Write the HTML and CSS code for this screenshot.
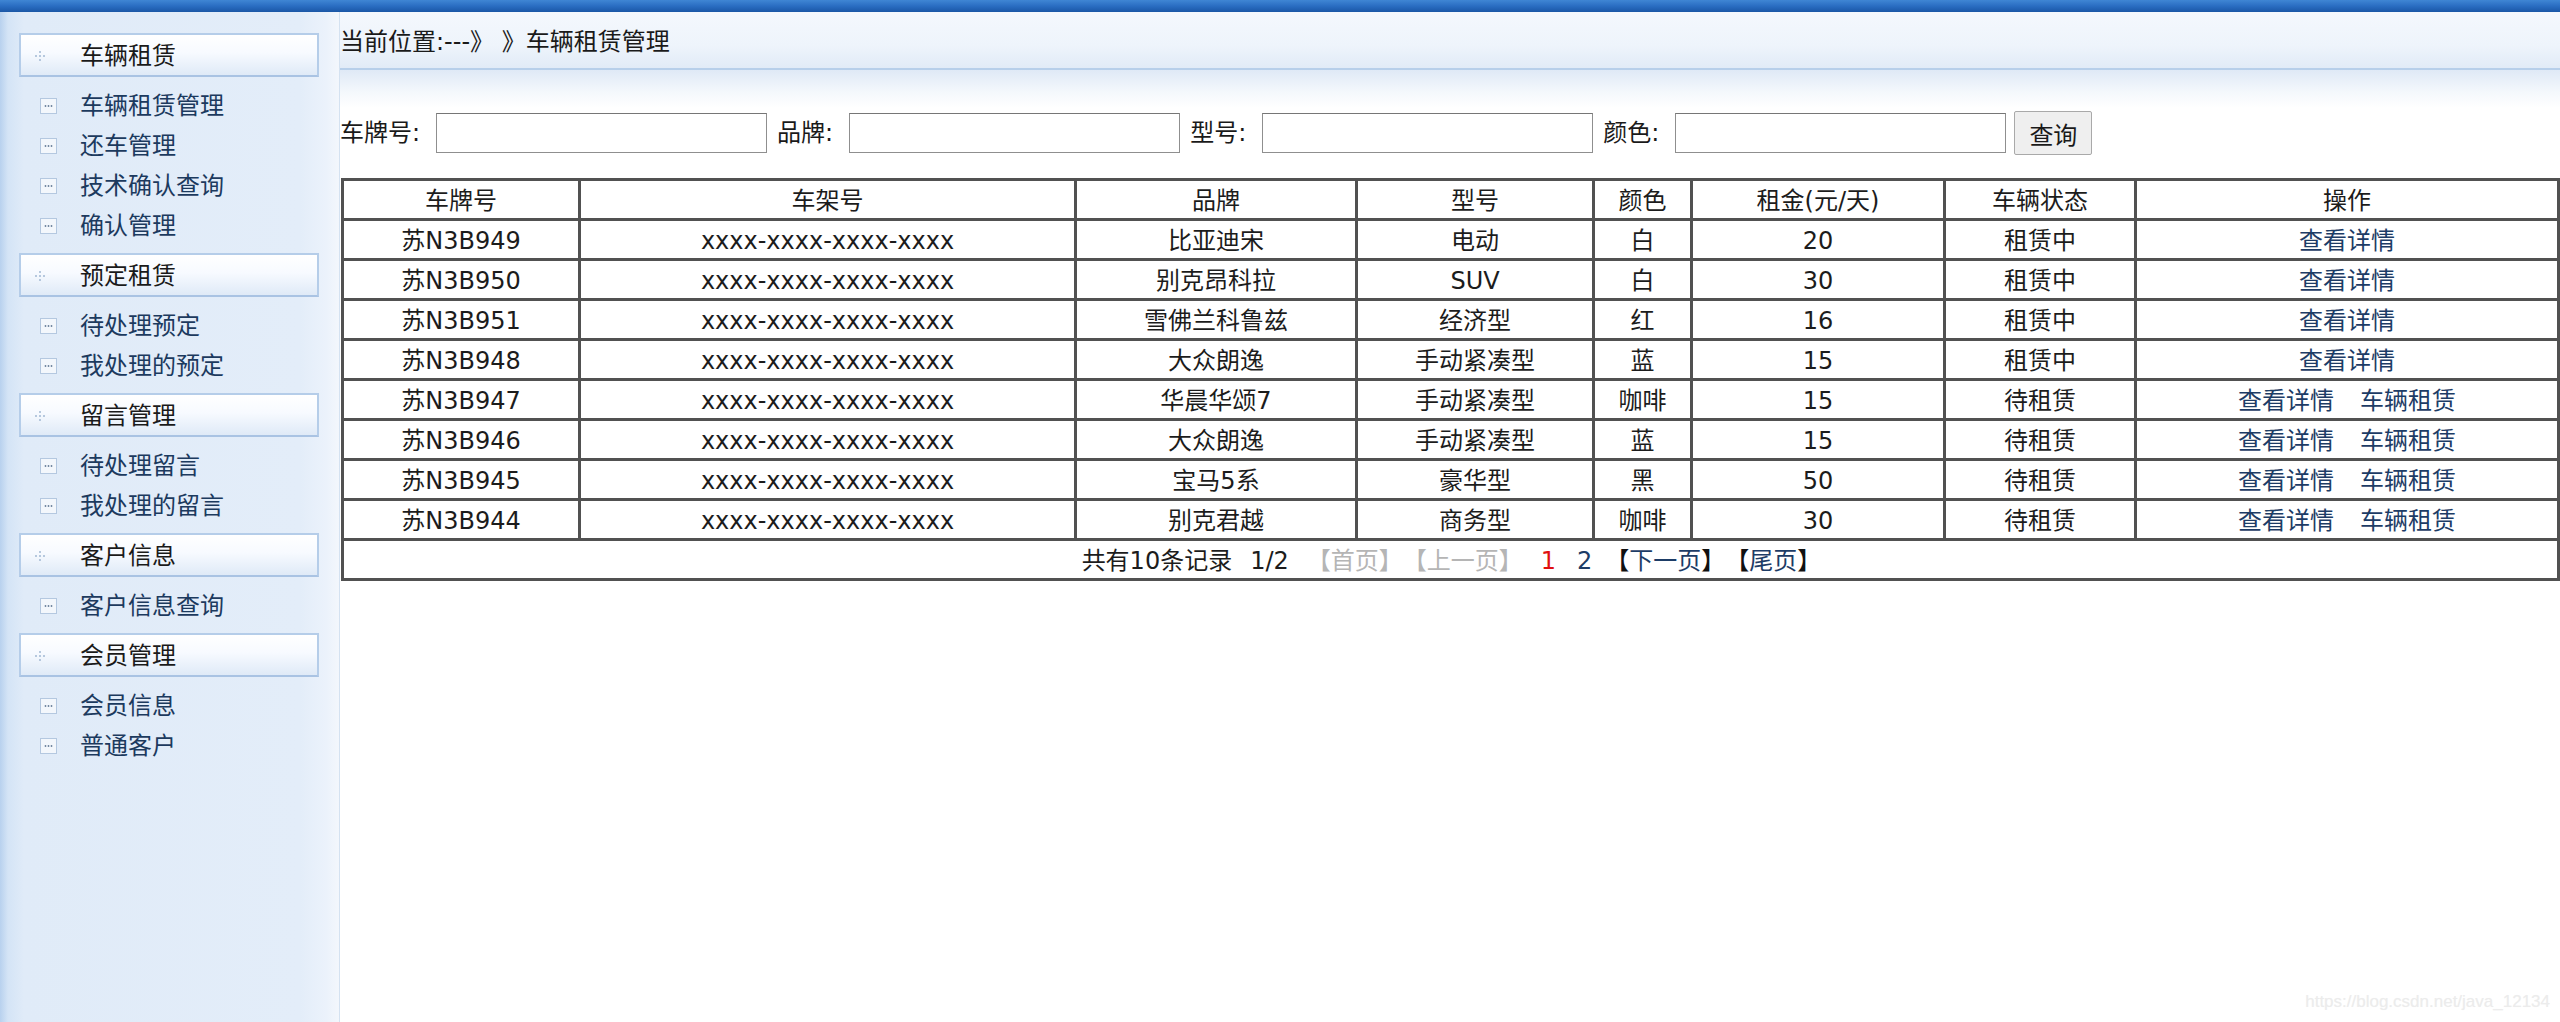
FILE: index.html
```html
<!DOCTYPE html>
<html lang="zh-CN">
<head>
<meta charset="utf-8">
<title>车辆租赁管理</title>
<link rel="stylesheet" href="styles.css">
</head>
<body>
<div class="topbar"></div>
<div class="layout">
  <aside class="sidebar">
    <div class="group">
      <div class="ghead"><svg class="gicon" viewBox="0 0 12 12"><circle cx="6" cy="2" r="1"/><circle cx="2" cy="6" r="1"/><circle cx="6" cy="6" r="1"/><circle cx="10" cy="6" r="1"/><circle cx="6" cy="10" r="1"/></svg><span>车辆租赁</span></div>
      <ul class="items">
        <li><svg class="iicon" viewBox="0 0 17 16"><rect x="0.5" y="0.5" width="16" height="15" fill="#f3f7fc" stroke="#b4c8e0"/><circle cx="5.5" cy="8" r="0.9"/><circle cx="8.5" cy="8" r="0.9"/><circle cx="11.5" cy="8" r="0.9"/></svg><a>车辆租赁管理</a></li>
        <li><svg class="iicon" viewBox="0 0 17 16"><rect x="0.5" y="0.5" width="16" height="15" fill="#f3f7fc" stroke="#b4c8e0"/><circle cx="5.5" cy="8" r="0.9"/><circle cx="8.5" cy="8" r="0.9"/><circle cx="11.5" cy="8" r="0.9"/></svg><a>还车管理</a></li>
        <li><svg class="iicon" viewBox="0 0 17 16"><rect x="0.5" y="0.5" width="16" height="15" fill="#f3f7fc" stroke="#b4c8e0"/><circle cx="5.5" cy="8" r="0.9"/><circle cx="8.5" cy="8" r="0.9"/><circle cx="11.5" cy="8" r="0.9"/></svg><a>技术确认查询</a></li>
        <li><svg class="iicon" viewBox="0 0 17 16"><rect x="0.5" y="0.5" width="16" height="15" fill="#f3f7fc" stroke="#b4c8e0"/><circle cx="5.5" cy="8" r="0.9"/><circle cx="8.5" cy="8" r="0.9"/><circle cx="11.5" cy="8" r="0.9"/></svg><a>确认管理</a></li>
      </ul>
    </div>
    <div class="group">
      <div class="ghead"><svg class="gicon" viewBox="0 0 12 12"><circle cx="6" cy="2" r="1"/><circle cx="2" cy="6" r="1"/><circle cx="6" cy="6" r="1"/><circle cx="10" cy="6" r="1"/><circle cx="6" cy="10" r="1"/></svg><span>预定租赁</span></div>
      <ul class="items">
        <li><svg class="iicon" viewBox="0 0 17 16"><rect x="0.5" y="0.5" width="16" height="15" fill="#f3f7fc" stroke="#b4c8e0"/><circle cx="5.5" cy="8" r="0.9"/><circle cx="8.5" cy="8" r="0.9"/><circle cx="11.5" cy="8" r="0.9"/></svg><a>待处理预定</a></li>
        <li><svg class="iicon" viewBox="0 0 17 16"><rect x="0.5" y="0.5" width="16" height="15" fill="#f3f7fc" stroke="#b4c8e0"/><circle cx="5.5" cy="8" r="0.9"/><circle cx="8.5" cy="8" r="0.9"/><circle cx="11.5" cy="8" r="0.9"/></svg><a>我处理的预定</a></li>
      </ul>
    </div>
    <div class="group">
      <div class="ghead"><svg class="gicon" viewBox="0 0 12 12"><circle cx="6" cy="2" r="1"/><circle cx="2" cy="6" r="1"/><circle cx="6" cy="6" r="1"/><circle cx="10" cy="6" r="1"/><circle cx="6" cy="10" r="1"/></svg><span>留言管理</span></div>
      <ul class="items">
        <li><svg class="iicon" viewBox="0 0 17 16"><rect x="0.5" y="0.5" width="16" height="15" fill="#f3f7fc" stroke="#b4c8e0"/><circle cx="5.5" cy="8" r="0.9"/><circle cx="8.5" cy="8" r="0.9"/><circle cx="11.5" cy="8" r="0.9"/></svg><a>待处理留言</a></li>
        <li><svg class="iicon" viewBox="0 0 17 16"><rect x="0.5" y="0.5" width="16" height="15" fill="#f3f7fc" stroke="#b4c8e0"/><circle cx="5.5" cy="8" r="0.9"/><circle cx="8.5" cy="8" r="0.9"/><circle cx="11.5" cy="8" r="0.9"/></svg><a>我处理的留言</a></li>
      </ul>
    </div>
    <div class="group">
      <div class="ghead"><svg class="gicon" viewBox="0 0 12 12"><circle cx="6" cy="2" r="1"/><circle cx="2" cy="6" r="1"/><circle cx="6" cy="6" r="1"/><circle cx="10" cy="6" r="1"/><circle cx="6" cy="10" r="1"/></svg><span>客户信息</span></div>
      <ul class="items">
        <li><svg class="iicon" viewBox="0 0 17 16"><rect x="0.5" y="0.5" width="16" height="15" fill="#f3f7fc" stroke="#b4c8e0"/><circle cx="5.5" cy="8" r="0.9"/><circle cx="8.5" cy="8" r="0.9"/><circle cx="11.5" cy="8" r="0.9"/></svg><a>客户信息查询</a></li>
      </ul>
    </div>
    <div class="group">
      <div class="ghead"><svg class="gicon" viewBox="0 0 12 12"><circle cx="6" cy="2" r="1"/><circle cx="2" cy="6" r="1"/><circle cx="6" cy="6" r="1"/><circle cx="10" cy="6" r="1"/><circle cx="6" cy="10" r="1"/></svg><span>会员管理</span></div>
      <ul class="items">
        <li><svg class="iicon" viewBox="0 0 17 16"><rect x="0.5" y="0.5" width="16" height="15" fill="#f3f7fc" stroke="#b4c8e0"/><circle cx="5.5" cy="8" r="0.9"/><circle cx="8.5" cy="8" r="0.9"/><circle cx="11.5" cy="8" r="0.9"/></svg><a>会员信息</a></li>
        <li><svg class="iicon" viewBox="0 0 17 16"><rect x="0.5" y="0.5" width="16" height="15" fill="#f3f7fc" stroke="#b4c8e0"/><circle cx="5.5" cy="8" r="0.9"/><circle cx="8.5" cy="8" r="0.9"/><circle cx="11.5" cy="8" r="0.9"/></svg><a>普通客户</a></li>
      </ul>
    </div>
  </aside>
  <main class="main">
    <div class="crumb">当前位置:---》 》车辆租赁管理</div>
    <form class="search">
      <label class="lbl">车牌号:</label><input class="inp" type="text">
      <label class="lbl">品牌:</label><input class="inp" type="text">
      <label class="lbl">型号:</label><input class="inp" type="text">
      <label class="lbl">颜色:</label><input class="inp" type="text">
      <button class="btn" type="button">查询</button>
    </form>
    <table class="grid">
      <colgroup>
        <col class="c1"><col class="c2"><col class="c3"><col class="c4"><col class="c5"><col class="c6"><col class="c7"><col class="c8">
      </colgroup>
      <thead>
        <tr><th>车牌号</th><th>车架号</th><th>品牌</th><th>型号</th><th>颜色</th><th>租金(元/天)</th><th>车辆状态</th><th>操作</th></tr>
      </thead>
      <tbody>
        <tr><td>苏N3B949</td><td>xxxx-xxxx-xxxx-xxxx</td><td>比亚迪宋</td><td>电动</td><td>白</td><td>20</td><td>租赁中</td><td><a class="lnk">查看详情</a></td></tr>
        <tr><td>苏N3B950</td><td>xxxx-xxxx-xxxx-xxxx</td><td>别克昂科拉</td><td>SUV</td><td>白</td><td>30</td><td>租赁中</td><td><a class="lnk">查看详情</a></td></tr>
        <tr><td>苏N3B951</td><td>xxxx-xxxx-xxxx-xxxx</td><td>雪佛兰科鲁兹</td><td>经济型</td><td>红</td><td>16</td><td>租赁中</td><td><a class="lnk">查看详情</a></td></tr>
        <tr><td>苏N3B948</td><td>xxxx-xxxx-xxxx-xxxx</td><td>大众朗逸</td><td>手动紧凑型</td><td>蓝</td><td>15</td><td>租赁中</td><td><a class="lnk">查看详情</a></td></tr>
        <tr><td>苏N3B947</td><td>xxxx-xxxx-xxxx-xxxx</td><td>华晨华颂7</td><td>手动紧凑型</td><td>咖啡</td><td>15</td><td>待租赁</td><td><a class="lnk">查看详情</a><a class="lnk second">车辆租赁</a></td></tr>
        <tr><td>苏N3B946</td><td>xxxx-xxxx-xxxx-xxxx</td><td>大众朗逸</td><td>手动紧凑型</td><td>蓝</td><td>15</td><td>待租赁</td><td><a class="lnk">查看详情</a><a class="lnk second">车辆租赁</a></td></tr>
        <tr><td>苏N3B945</td><td>xxxx-xxxx-xxxx-xxxx</td><td>宝马5系</td><td>豪华型</td><td>黑</td><td>50</td><td>待租赁</td><td><a class="lnk">查看详情</a><a class="lnk second">车辆租赁</a></td></tr>
        <tr><td>苏N3B944</td><td>xxxx-xxxx-xxxx-xxxx</td><td>别克君越</td><td>商务型</td><td>咖啡</td><td>30</td><td>待租赁</td><td><a class="lnk">查看详情</a><a class="lnk second">车辆租赁</a></td></tr>
      </tbody>
      <tfoot>
        <tr><td colspan="8"><div class="pager"><span>共有10条记录</span><span class="pg-gap">1/2</span><span class="pg-gap dis">【首页】</span><span class="dis">【上一页】</span><span class="pg-gap cur">1</span><span class="pg-num lnk">2</span><span class="pg-next"><span class="br">【</span><a class="lnk">下一页</a><span class="br">】</span></span><span><span class="br">【</span><a class="lnk">尾页</a><span class="br">】</span></span></div></td></tr>
      </tfoot>
    </table>
  </main>
</div>
<div class="watermark">https://blog.csdn.net/java_12134</div>
</body>
</html>
```
FILE: styles.css
```css
html, body {
  margin: 0;
  padding: 0;
  height: 100%;
  overflow: hidden;
}
body {
  font-family: "DejaVu Sans", "Noto Sans CJK SC", sans-serif;
  font-size: 24px;
  color: #1c1c1c;
  background: #ffffff;
  position: relative;
}
.topbar {
  height: 12px;
  background: linear-gradient(to bottom, #3f86d4 0%, #2a6dc2 50%, #1b57a6 100%);
}
.layout {
  display: flex;
  height: 1010px;
}
.sidebar {
  width: 339px;
  flex: none;
  box-sizing: border-box;
  padding: 21px 20px 0 19px;
  background: linear-gradient(to right, #b8d1ee 0px, #d4e4f6 8px, #e0ebf8 24px, #e3edf9 300px, #ebf2fb 326px, #f3f7fc 339px);
}
.group {
  margin-bottom: 8px;
}
.ghead {
  height: 44px;
  box-sizing: border-box;
  border: 2px solid #b5cde9;
  border-bottom-color: #a9c3e3;
  background: linear-gradient(to bottom, #ffffff 0%, #f7faff 45%, #dfeaf7 100%);
  display: flex;
  align-items: center;
  color: #1a1a1a;
  line-height: 1;
  padding-top: 1px;
}
.gicon {
  width: 12px;
  height: 12px;
  fill: #a2b8d3;
  margin-left: 13px;
  margin-right: 34px;
  flex: none;
}
.items {
  list-style: none;
  margin: 8px 0 0 0;
  padding: 0;
}
.items li {
  height: 40px;
  display: flex;
  align-items: center;
  line-height: 1;
  padding-top: 1px;
  box-sizing: border-box;
}
.iicon {
  width: 17px;
  height: 16px;
  fill: #6a7f9b;
  margin-left: 21px;
  margin-right: 23px;
  flex: none;
}
.items a {
  color: #1c3a5e;
}
.main {
  flex: 1;
  min-width: 0;
  border-left: 1px solid #d4e2f1;
  background: #ffffff;
}
.crumb {
  height: 58px;
  box-sizing: border-box;
  border-bottom: 2px solid #b7cfea;
  background: linear-gradient(to bottom, #f4f8fd 0%, #eef4fb 60%, #e1ebf7 100%);
  display: flex;
  align-items: center;
  line-height: 1;
  color: #1a1a1a;
  padding-top: 3px;
}
.search {
  margin: 0;
  padding: 41px 0 23px 0;
  display: flex;
  align-items: center;
  height: 44px;
  background: linear-gradient(to bottom, #dfe9f6 0px, #f4f8fc 22px, #ffffff 38px);
}
.lbl {
  margin-right: 16px;
  line-height: 1;
  color: #1a1a1a;
}
.inp {
  width: 331px;
  height: 40px;
  box-sizing: border-box;
  border: 1px solid #8f8f8f;
  border-top-color: #767676;
  margin: 0 10px 0 0;
  padding: 0 4px;
  background: #ffffff;
  font: inherit;
}
.btn {
  width: 78px;
  height: 44px;
  box-sizing: border-box;
  border: 1px solid #a9a9a9;
  border-radius: 2px;
  background: #efefef;
  font: inherit;
  color: #1a1a1a;
  padding: 0;
  margin-left: -2px;
}
.grid {
  margin-left: 1px;
  width: 2216px;
  table-layout: fixed;
  border-collapse: collapse;
  border: 3px solid #505050;
}
.c1 { width: 237px; }
.c2 { width: 496px; }
.c3 { width: 281px; }
.c4 { width: 237px; }
.c5 { width: 98px; }
.c6 { width: 253px; }
.c7 { width: 191px; }
.c8 { width: 423px; }
.grid th, .grid td {
  border: 3px solid #515151;
  height: 35px;
  padding: 2px 0 0 0;
  text-align: center;
  vertical-align: middle;
  font-weight: normal;
  line-height: 1;
  color: #1c1c1c;
}
.lnk {
  color: #1d3c66;
}
.second {
  margin-left: 26px;
}
.pager {
  display: flex;
  justify-content: center;
  align-items: center;
  padding-left: 2px;
}
.pg-gap {
  margin-left: 18px;
}
.dis {
  color: #b5b5b5;
}
.cur {
  color: #e01010;
}
.pg-num {
  margin-left: 21px;
}
.pg-next {
  margin-left: 13px;
}
.br {
  color: #111111;
}
.watermark {
  position: absolute;
  right: 10px;
  bottom: 10px;
  font-family: "Liberation Sans", sans-serif;
  font-size: 17px;
  color: #ececec;
  text-shadow: 0 0 1px #f4f4f4;
}
```
